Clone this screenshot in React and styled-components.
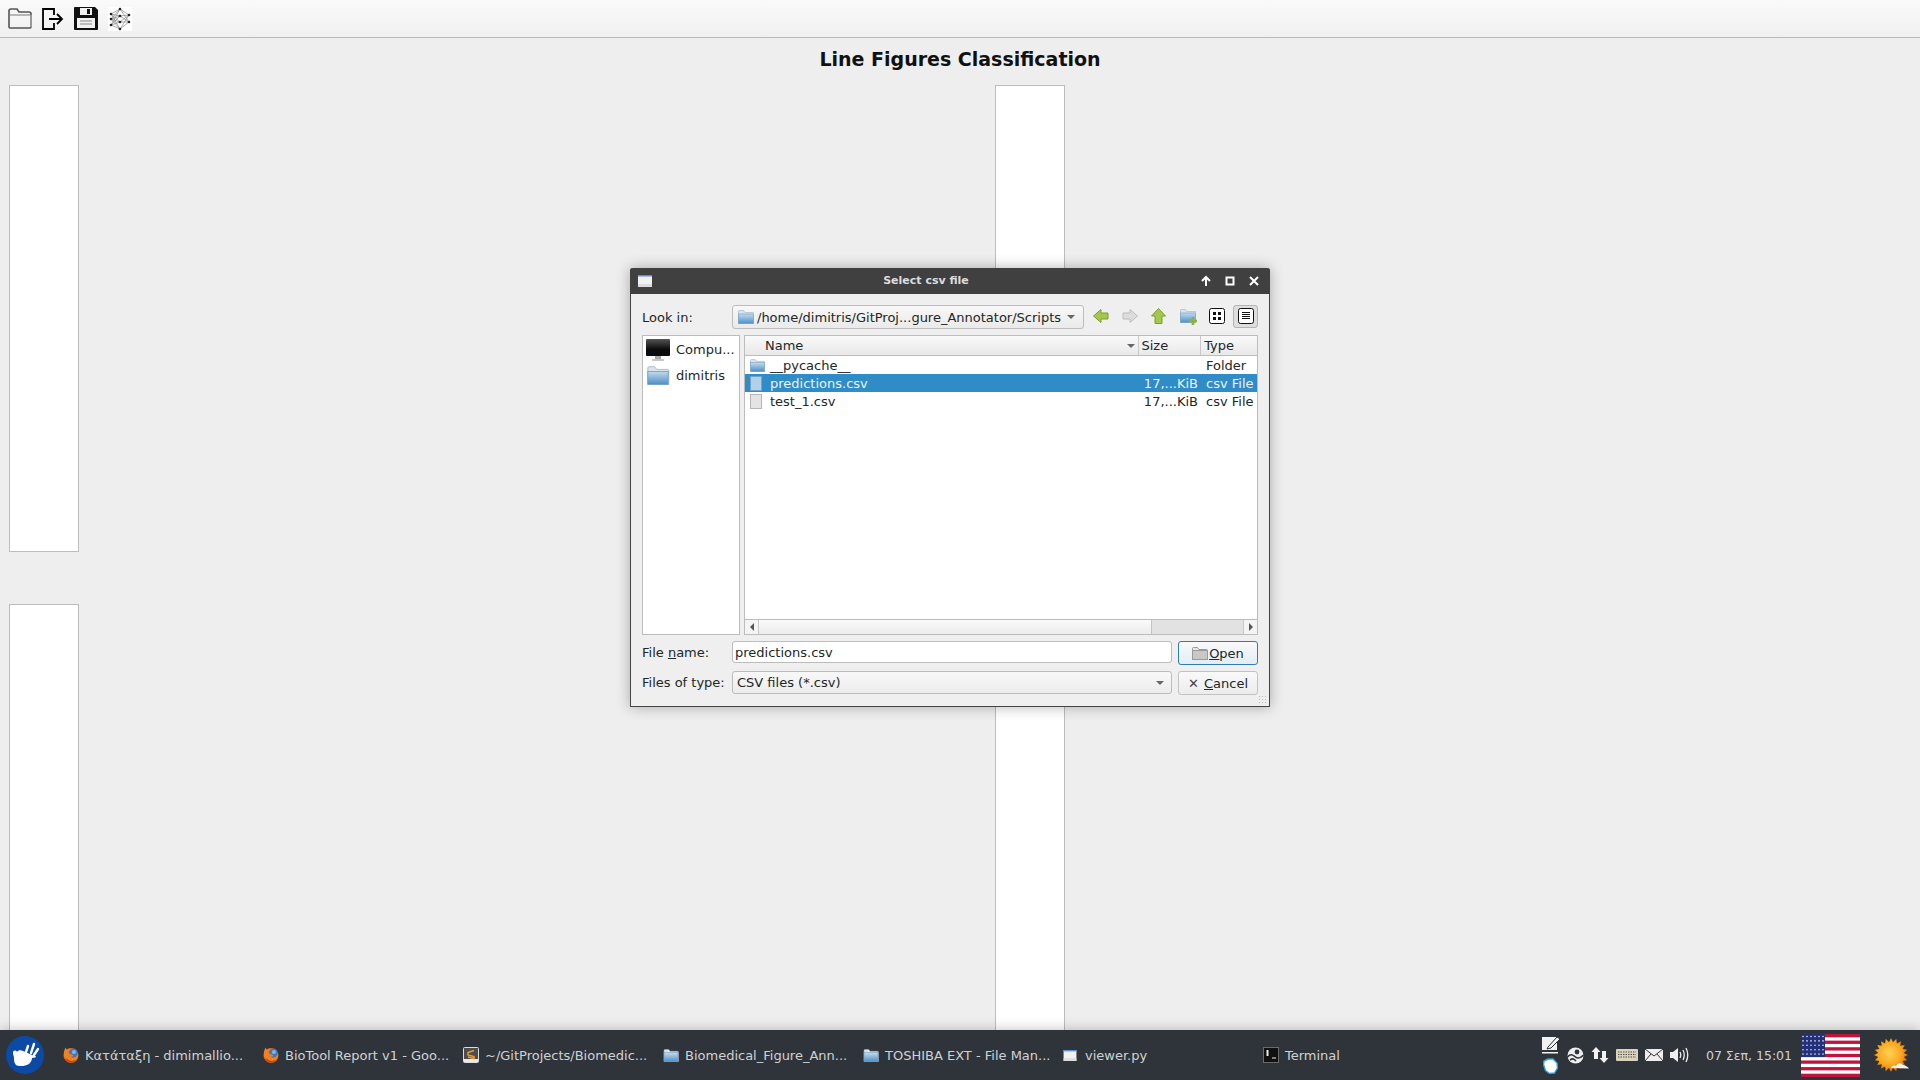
import React from 'react';
import styled, { createGlobalStyle } from 'styled-components';

const GlobalStyle = createGlobalStyle`
    html, body { margin:0; padding:0; height:100%; }
    body { font-family:"DejaVu Sans", sans-serif; font-size:13px; color:#232627; background:#eee; overflow:hidden; }
`;

const FolderIcon = ({ size = 16, h = 14 }) => (
    <svg width={size} height={h} viewBox="0 0 16 14">
        <defs>
            <linearGradient id="fld" x1="0" y1="0" x2="0" y2="1">
                <stop offset="0" stopColor="#c4d9ec" />
                <stop offset="0.45" stopColor="#8db9dc" />
                <stop offset="1" stopColor="#4f8fc4" />
            </linearGradient>
        </defs>
        <path d="M0.5 13.5V1.5q0-1 1-1h4l1.500 2h8q1 0 1 1v10z" fill="#d9e3ea" stroke="#9fb3c2" strokeWidth="0.6" />
        <rect x="0.5" y="4" width="15" height="9.500" fill="url(#fld)" stroke="#6f9dbf" strokeWidth="0.6" />
    </svg>
);

const GrayFolder = () => (
    <svg width="16" height="13" viewBox="0 0 16 13">
        <path d="M0.500 12.500V1.500q0-1 1-1h4l1.500 2h7.500q1 0 1 1v9z" fill="#e6e6e6" stroke="#9a9a9a" />
        <rect x="0.500" y="3.500" width="15" height="9" fill="#c8c8c8" stroke="#9a9a9a" />
    </svg>
);

const FileIcon = ({ selected }) => (
    <svg width="12" height="15" viewBox="0 0 12 15">
        <rect x="0.500" y="0.500" width="11" height="14" fill={selected ? '#b4d0e6' : '#e4e4e4'} stroke={selected ? '#6ea4cc' : '#b5b5b5'} />
    </svg>
);

const WindowIcon = ({ w = 14, h = 12 }) => (
    <svg width={w} height={h} viewBox="0 0 14 12">
        <rect x="0" y="0" width="14" height="12" fill="#f1f1f1" />
        <rect x="0" y="0" width="14" height="1.500" fill="#5a8fd0" />
        <rect x="0" y="9" width="14" height="3" fill="#dcdcdc" />
    </svg>
);

const FirefoxIcon = () => (
    <svg width="16" height="16" viewBox="0 0 16 16">
        <circle cx="8" cy="8.500" r="7.500" fill="#e2601a" />
        <circle cx="10.500" cy="6" r="4.200" fill="#3f78c0" />
        <circle cx="11" cy="5" r="2" fill="#86b6e2" />
        <path d="M1 7c-.5-2.500.5-5 2-6.500 0 1 .5 2 1 2.500 1-1 3-1.500 4.500-1-1.500.5-3 1.500-3 3 0 1.500 1.500 2.500 3 2.500 1 0 2 .5 1.500 1.500-1 1-2.500 1-3.500.5 1 1.500 4 2 6 .5 1-.5 2-2 2-3 .5 1 .5 2 .5 2-.5 3.500-3.500 6-7 6-4 0-7.500-3.500-7-8z" fill="#f0821f" />
        <path d="M2 11.500c1.500 2.500 3.500 4 6 4 2 0 4-1 5-2.500-2 1-6 1.500-8-.5-1-.5-2-1-3-1z" fill="#c9401a" />
    </svg>
);

const SublimeIcon = () => (
    <svg width="16" height="16" viewBox="0 0 16 16">
        <rect x="0.500" y="0.500" width="15" height="15" rx="1" fill="#4d4d4d" stroke="#ddd" />
        <rect x="1" y="12" width="14" height="3" fill="#e8e8e8" />
        <path d="M11 3.500 5 5.500v2.500l6 1.500v2L5 10" fill="none" stroke="#f0962a" strokeWidth="1.500" />
    </svg>
);

const TerminalIcon = () => (
    <svg width="16" height="16" viewBox="0 0 16 16">
        <rect x="0.500" y="0.500" width="15" height="15" fill="#111" stroke="#6b6b6b" />
        <path d="M3 4h3M3 6h3M3 8h3M4.500 3v6M9 11h4" stroke="#eee" strokeWidth="1" />
    </svg>
);

const XfceLogo = () => (
    <svg width="38" height="38" viewBox="0 0 38 38">
        <circle cx="19" cy="19" r="19" fill="#0b4aa5" />
        <path d="M7 17c0-3 3-3 4-1 1-2 4-2 6-1 3 1 6 3 9 4 2 .5 4 1 4 2-1 1-3 .5-4 1 0 3-2 5-3 6-3 2-10 3-13 1-2-2-2-5-2-7 0-2-1-3-1-5z" fill="#fff" />
        <path d="M20 16l2-6M25 17l3-9M28 19l4-6" stroke="#fff" strokeWidth="2.400" strokeLinecap="round" />
    </svg>
);

const Flag = () => (
    <svg width="59" height="43" viewBox="0 0 59 43">
        <rect width="59" height="43" fill="#fff" />
        {[0, 1, 2, 3, 4, 5, 6].map(i => (
            <rect key={i} x="0" y={i * 6.615} width="59" height="3.300" fill="#c0143c" />
        ))}
        <rect width="24" height="23" fill="#24307a" />
        {Array.from({ length: 30 }).map((_, i) => (
            <circle key={i} cx={2 + (i % 6) * 4} cy={2.500 + Math.floor(i / 6) * 4.400} r="0.800" fill="#dfe3f2" />
        ))}
    </svg>
);

const sunPoints = () => {
    const pts = [];
    for (let i = 0; i < 40; i++) {
        const r = i % 2 === 0 ? 17 : 13;
        const a = (i / 40) * Math.PI * 2;
        pts.push(`${(18 + r * Math.cos(a)).toFixed(1)},${(18 + r * Math.sin(a)).toFixed(1)}`);
    }
    return pts.join(' ');
};

const Sun = () => (
    <svg width="37" height="37" viewBox="0 0 37 37">
        <defs>
            <radialGradient id="sunfill" cx="0.450" cy="0.450" r="0.550">
                <stop offset="0" stopColor="#ffd257" />
                <stop offset="0.650" stopColor="#fca61d" />
                <stop offset="1" stopColor="#e86f0b" />
            </radialGradient>
        </defs>
        <polygon points={sunPoints()} fill="url(#sunfill)" />
        <path d="M18 31c1-3 4-3 5-2 1-3 5-4 7-1 2 0 5 2 6 3.500z" fill="#f3f3f3" />
    </svg>
);

const NetworkIcon = () => {
    const left = [[3, 7], [3, 12], [3, 18]];
    const mid = [[12, 2], [12, 9], [12, 15], [12, 22]];
    const right = [[21, 8], [21, 15]];
    const lines = [];
    left.forEach(a => mid.forEach(b => lines.push([a, b])));
    mid.forEach(a => right.forEach(b => lines.push([a, b])));
    return (
        <svg width="24" height="24" viewBox="0 0 24 24">
            <rect width="24" height="24" fill="#fff" />
            {lines.map(([a, b], i) => (
                <line key={i} x1={a[0]} y1={a[1]} x2={b[0]} y2={b[1]} stroke="#8a8a8a" strokeWidth="0.700" />
            ))}
            {[...left, ...mid, ...right].map((p, i) => (
                <circle key={i} cx={p[0]} cy={p[1]} r="1.300" fill="#222" />
            ))}
        </svg>
    );
};

const tasks = [
    { icon: <FirefoxIcon />, label: 'Κατάταξη - dimimallio...' },
    { icon: <FirefoxIcon />, label: 'BioTool Report v1 - Goo...' },
    { icon: <SublimeIcon />, label: '~/GitProjects/Biomedic...' },
    { icon: <FolderIcon size={16} h={13} />, label: 'Biomedical_Figure_Ann...' },
    { icon: <FolderIcon size={16} h={13} />, label: 'TOSHIBA EXT - File Man...' },
    { icon: <WindowIcon w={14} h={11} />, label: 'viewer.py' },
    { icon: <TerminalIcon />, label: 'Terminal' },
];

const App = () => {
    return (
        <Page>
            <GlobalStyle />
            <Toolbar>
                <ToolButton>
                    <svg width="24" height="21" viewBox="0 0 24 21">
                        <path d="M1 19V3q0-2 2-2h6l2 3h10q2 0 2 2v13q0 1-1 1H2q-1 0-1-1z" fill="none" stroke="#555" strokeWidth="1.600" />
                        <path d="M1 7h22" stroke="#777" strokeWidth="1" />
                        <path d="M23 7v12" stroke="#999" strokeWidth="2" />
                    </svg>
                </ToolButton>
                <ToolButton>
                    <svg width="22" height="22" viewBox="0 0 22 22">
                        <path d="M12 7V1H1v20h11v-6" fill="none" stroke="#000" strokeWidth="1.800" />
                        <path d="M7 11h13M15 6l5 5-5 5" fill="none" stroke="#000" strokeWidth="1.800" />
                    </svg>
                </ToolButton>
                <ToolButton>
                    <svg width="24" height="23" viewBox="0 0 24 23">
                        <path d="M0 1q0-1 1-1h20l3 3v19q0 1-1 1H1q-1 0-1-1z" fill="#111" />
                        <rect x="6" y="1" width="12" height="7" fill="#f2f2f2" />
                        <rect x="13" y="2" width="3" height="5" fill="#111" />
                        <rect x="3" y="11" width="18" height="10" fill="#f2f2f2" />
                        <path d="M6 14h12M6 17h12" stroke="#aaa" strokeWidth="1.500" />
                    </svg>
                </ToolButton>
                <ToolButton><NetworkIcon /></ToolButton>
            </Toolbar>
            <Content>
                <Title>Line Figures Classification</Title>
                <PanelGrid>
                    <Panel />
                    <Panel />
                    <Panel />
                    <Panel />
                </PanelGrid>
                <Dialog>
                    <TitleBar>
                        <WindowIcon />
                        <TitleText>Select csv file</TitleText>
                        <WindowButtons>
                            <svg width="12" height="12" viewBox="0 0 12 12">
                                <path d="M6 11V2M2 6l4-4 4 4" fill="none" stroke="#fff" strokeWidth="2" />
                            </svg>
                            <svg width="12" height="12" viewBox="0 0 12 12">
                                <rect x="2.500" y="2.500" width="7" height="7" fill="none" stroke="#fff" strokeWidth="2" />
                            </svg>
                            <svg width="12" height="12" viewBox="0 0 12 12">
                                <path d="M2 2l8 8M10 2l-8 8" fill="none" stroke="#fff" strokeWidth="2" />
                            </svg>
                        </WindowButtons>
                    </TitleBar>
                    <DialogBody>
                        <LookRow>
                            <FieldLabel>Look in:</FieldLabel>
                            <PathCombo>
                                <FolderIcon />
                                <PathText>/home/dimitris/GitProj...gure_Annotator/Scripts</PathText>
                                <Caret />
                            </PathCombo>
                            <NavIcons>
                                <NavIcon>
                                    <svg width="16" height="14" viewBox="0 0 16 14">
                                        <path d="M0.500 7 8 0.500V4h7v6H8v3.500z" fill="#a3c84a" stroke="#7d9d2e" />
                                    </svg>
                                </NavIcon>
                                <NavIcon>
                                    <svg width="16" height="14" viewBox="0 0 16 14">
                                        <path d="M15.500 7 8 0.500V4H1v6h7v3.500z" fill="#dcdcdc" stroke="#bcbcbc" />
                                    </svg>
                                </NavIcon>
                                <NavIcon>
                                    <svg width="15" height="16" viewBox="0 0 15 16">
                                        <path d="M7.500 0.500 14.500 8H11v7.500H4V8H0.500z" fill="#a3c84a" stroke="#7d9d2e" />
                                    </svg>
                                </NavIcon>
                                <NavIcon>
                                    <NewFolder>
                                        <FolderIcon />
                                        <PlusBadge>
                                            <svg width="8" height="8" viewBox="0 0 8 8">
                                                <path d="M4 0v8M0 4h8" stroke="#8cb43c" strokeWidth="2.600" />
                                            </svg>
                                        </PlusBadge>
                                    </NewFolder>
                                </NavIcon>
                                <NavIcon>
                                    <svg width="16" height="16" viewBox="0 0 16 16">
                                        <rect x="0.500" y="0.500" width="15" height="15" rx="2" fill="#fff" stroke="#111" />
                                        <path d="M4 4h3v3H4zM9 4h3v3H9zM4 9h3v3H4zM9 9h3v3H9z" fill="#111" />
                                    </svg>
                                </NavIcon>
                                <NavIcon $active>
                                    <svg width="16" height="16" viewBox="0 0 16 16">
                                        <rect x="0.500" y="0.500" width="15" height="15" rx="2" fill="#fff" stroke="#111" />
                                        <path d="M4 4.500h8M4 6.500h8M4 8.500h8M4 10.500h8" stroke="#111" />
                                    </svg>
                                </NavIcon>
                            </NavIcons>
                        </LookRow>
                        <BrowserRow>
                            <Sidebar>
                                <SideItem>
                                    <svg width="24" height="22" viewBox="0 0 24 22">
                                        <defs>
                                            <linearGradient id="screen" x1="0" y1="0" x2="0" y2="1">
                                                <stop offset="0" stopColor="#555" />
                                                <stop offset="0.600" stopColor="#0c0c0c" />
                                            </linearGradient>
                                        </defs>
                                        <rect width="24" height="17" rx="1" fill="url(#screen)" />
                                        <rect x="9" y="17" width="6" height="3" fill="#aaa" />
                                        <rect x="6" y="20" width="12" height="2" fill="#c8c8c8" />
                                    </svg>
                                    <SideLabel>Compu...</SideLabel>
                                </SideItem>
                                <SideItem>
                                    <FolderIcon size={24} h={19} />
                                    <SideLabel>dimitris</SideLabel>
                                </SideItem>
                            </Sidebar>
                            <FileView>
                                <HeaderRow>
                                    <HeaderCell $w={396} $pad={20}>
                                        Name
                                        <SortCaret />
                                    </HeaderCell>
                                    <HeaderCell $w={62} $pad={2}>Size</HeaderCell>
                                    <HeaderCell $w={56} $pad={3} $last>Type</HeaderCell>
                                </HeaderRow>
                                <FileRows>
                                    <FileRow>
                                        <NameCell><IconSlot><FolderIcon size={15} h={13} /></IconSlot>__pycache__</NameCell>
                                        <SizeCell />
                                        <TypeCell>Folder</TypeCell>
                                    </FileRow>
                                    <FileRow $selected>
                                        <NameCell><IconSlot><FileIcon selected /></IconSlot>predictions.csv</NameCell>
                                        <SizeCell>17,...KiB</SizeCell>
                                        <TypeCell>csv File</TypeCell>
                                    </FileRow>
                                    <FileRow>
                                        <NameCell><IconSlot><FileIcon /></IconSlot>test_1.csv</NameCell>
                                        <SizeCell>17,...KiB</SizeCell>
                                        <TypeCell>csv File</TypeCell>
                                    </FileRow>
                                </FileRows>
                                <HScroll>
                                    <ScrollEnd>
                                        <ArrowLeft />
                                    </ScrollEnd>
                                    <ScrollThumb />
                                    <ScrollTrack />
                                    <ScrollEnd $right>
                                        <ArrowRight />
                                    </ScrollEnd>
                                </HScroll>
                            </FileView>
                        </BrowserRow>
                        <FormGrid>
                            <FormLabel>File <u>n</u>ame:</FormLabel>
                            <NameInput>predictions.csv</NameInput>
                            <ActionButton $focus>
                                <GrayFolder />
                                <span><u>O</u>pen</span>
                            </ActionButton>
                            <FormLabel>Files of type:</FormLabel>
                            <TypeCombo>
                                CSV files (*.csv)
                                <Caret />
                            </TypeCombo>
                            <ActionButton>
                                <CancelMark>✕</CancelMark>
                                <span>&nbsp;<u>C</u>ancel</span>
                            </ActionButton>
                        </FormGrid>
                    </DialogBody>
                    <SizeGrip />
                </Dialog>
            </Content>
            <Taskbar>
                <StartButton><XfceLogo /></StartButton>
                <TaskList>
                    {tasks.map((t, i) => (
                        <TaskItem key={i}>
                            <TaskIcon>{t.icon}</TaskIcon>
                            {t.label}
                        </TaskItem>
                    ))}
                </TaskList>
                <Tray>
                    <TrayStack>
                        <svg width="18" height="18" viewBox="0 0 18 18">
                            <rect x="0" y="1" width="15" height="13" fill="#f2f2f2" />
                            <path d="M6 11 15 1l3 2-9 9-4 1z" fill="#f2f2f2" stroke="#2f343a" strokeWidth="1" />
                            <rect x="0" y="16" width="16" height="1.500" fill="#f2f2f2" />
                        </svg>
                        <SkypeSlot>
                            <svg width="15" height="16" viewBox="0 0 15 16">
                                <path d="M1 3 5 1h5l4 4 .5 5-3 5-5 .500-4-3-2-6z" fill="#fff" stroke="#2aa4e0" strokeWidth="1.400" />
                            </svg>
                        </SkypeSlot>
                    </TrayStack>
                    <TrayIcons>
                        <svg width="17" height="17" viewBox="0 0 17 17">
                            <circle cx="8.500" cy="8.500" r="8" fill="#eee" />
                            <path d="M0.500 10C4 6 6 8 8.500 10s5 1 8-2M3 13c3-2 4-1 6 1" fill="none" stroke="#2f343a" strokeWidth="1.600" />
                            <circle cx="10" cy="5" r="2.400" fill="#2f343a" />
                        </svg>
                        <svg width="18" height="18" viewBox="0 0 18 18">
                            <path d="M5 1 9.500 6H7v7H3V6H0.500z" fill="#f2f2f2" />
                            <path d="M13 17 8.500 12H11V5h4v7h2.500z" fill="#f2f2f2" />
                        </svg>
                        <svg width="22" height="12" viewBox="0 0 22 12">
                            <rect width="22" height="12" rx="1" fill="#d9d2bd" />
                            <path d="M2 3h18M2 5.500h18M2 8h18" stroke="#55524a" strokeWidth="1.200" strokeDasharray="1.500 1" />
                        </svg>
                        <svg width="18" height="12" viewBox="0 0 18 12">
                            <rect width="18" height="12" fill="#eee" />
                            <path d="M0 0l9 7 9-7M0 12l6-7M18 12l-6-7" fill="none" stroke="#333" strokeWidth="1" />
                        </svg>
                        <svg width="19" height="16" viewBox="0 0 19 16">
                            <path d="M0 5h3l5-4v14l-5-4H0z" fill="#eee" />
                            <path d="M10 5q1.500 3 0 6M13 3q2.500 5 0 10M16 1q3.500 7 0 14" fill="none" stroke="#eee" strokeWidth="1.300" />
                        </svg>
                    </TrayIcons>
                    <Clock>07 Σεπ, 15:01</Clock>
                    <Flag />
                    <SunSlot><Sun /></SunSlot>
                </Tray>
            </Taskbar>
        </Page>
    );
};

export default App;

// ------ UI Section
const Page = styled.div`
    height:100vh;
    display:flex;
    flex-direction:column;
    overflow:hidden;
`;

const Toolbar = styled.div`
    height:37px;
    flex:none;
    display:flex;
    align-items:center;
    padding-left:8px;
    gap:10px;
    background:linear-gradient(#fafafa, #f0f0f0);
    border-bottom:1px solid #b9b9b9;
`;

const ToolButton = styled.div`
    display:flex;
    align-items:center;
    justify-content:center;
    height:24px;
`;

const Content = styled.div`
    flex:1;
    position:relative;
    min-height:0;
    overflow:hidden;
    background:#eeeeee;
`;

const Title = styled.div`
    height:47px;
    text-align:center;
    font-size:19px;
    font-weight:bold;
    line-height:42px;
    color:#111;
`;

const PanelGrid = styled.div`
    display:grid;
    grid-template-columns:986px 986px;
    grid-auto-rows:467px;
    row-gap:52px;
    padding-left:9px;
`;

const Panel = styled.div`
    width:70px;
    background:#fff;
    border:1px solid #bdbdbd;
    box-sizing:border-box;
`;

const Dialog = styled.div`
    position:absolute;
    left:630px;
    top:230px;
    width:640px;
    height:439px;
    box-sizing:border-box;
    display:flex;
    flex-direction:column;
    background:#efefef;
    border:1px solid #444;
    border-top:none;
    border-radius:3px 3px 0 0;
    box-shadow:0 0 14px rgba(0,0,0,.3);
`;

const TitleBar = styled.div`
    height:26px;
    flex:none;
    margin:0 -1px;
    padding:0 8px;
    display:flex;
    align-items:center;
    position:relative;
    background:#404040;
    border-radius:3px 3px 0 0;
`;

const TitleText = styled.div`
    flex:1;
    text-align:center;
    color:#dddddd;
    font-size:11px;
    font-weight:bold;
    padding:0 0 2px 0;
`;

const WindowButtons = styled.div`
    display:flex;
    gap:12px;
    padding-right:2px;
`;

const DialogBody = styled.div`
    flex:1;
    display:flex;
    flex-direction:column;
    padding:11px 11px 0 11px;
`;

const LookRow = styled.div`
    display:flex;
    align-items:center;
    height:24px;
`;

const FieldLabel = styled.div`
    width:90px;
    flex:none;
    color:#232627;
    white-space:nowrap;
`;

const FormLabel = styled(FieldLabel)`
    padding-bottom:2px;
`;

const PathCombo = styled.div`
    width:352px;
    height:24px;
    flex:none;
    box-sizing:border-box;
    display:flex;
    align-items:center;
    padding:0 8px 0 5px;
    background:linear-gradient(#f8f8f8, #eaeaea);
    border:1px solid #bcbcbc;
    border-radius:3px;
`;

const PathText = styled.span`
    flex:1;
    margin-left:3px;
    white-space:nowrap;
`;

const Caret = styled.span`
    width:0;
    height:0;
    border-left:4px solid transparent;
    border-right:4px solid transparent;
    border-top:4px solid #666;
    margin-left:auto;
`;

const SortCaret = styled(Caret)`
    position:absolute;
    right:3px;
    top:8px;
`;

const NavIcons = styled.div`
    display:flex;
    align-items:center;
    margin:0 0 2px 4px;
    gap:4px;
`;

const NavIcon = styled.div`
    width:25px;
    height:23px;
    box-sizing:border-box;
    display:flex;
    align-items:center;
    justify-content:center;
    border:1px solid ${p => (p.$active ? '#b4b4b4' : 'transparent')};
    background:${p => (p.$active ? '#dedede' : 'transparent')};
    border-radius:3px;
`;

const NewFolder = styled.div`
    position:relative;
    display:flex;
`;

const PlusBadge = styled.div`
    position:absolute;
    right:-1px;
    bottom:-2px;
    display:flex;
`;

const BrowserRow = styled.div`
    display:flex;
    gap:4px;
    margin-top:6px;
    height:300px;
`;

const Sidebar = styled.div`
    width:98px;
    box-sizing:border-box;
    background:#fff;
    border:1px solid #bcbcbc;
    padding:1px 0 0 3px;
`;

const SideItem = styled.div`
    height:25px;
    display:flex;
    align-items:center;
    margin-bottom:1px;
`;

const SideLabel = styled.span`
    margin-left:6px;
    white-space:nowrap;
`;

const FileView = styled.div`
    width:514px;
    box-sizing:border-box;
    display:flex;
    flex-direction:column;
    background:#fff;
    border:1px solid #bcbcbc;
`;

const HeaderRow = styled.div`
    height:19px;
    flex:none;
    display:flex;
    background:linear-gradient(#f9f9f9, #e9e9e9);
    border-bottom:1px solid #bcbcbc;
`;

const HeaderCell = styled.div`
    width:${p => p.$w}px;
    box-sizing:border-box;
    position:relative;
    padding-left:${p => p.$pad}px;
    line-height:19px;
    border-right:${p => (p.$last ? 'none' : '1px solid #c9c9c9')};
`;

const FileRows = styled.div`
    flex:1;
`;

const FileRow = styled.div`
    height:18px;
    display:flex;
    align-items:center;
    background:${p => (p.$selected ? '#308cc6' : 'transparent')};
    color:${p => (p.$selected ? '#eaf3f9' : '#232627')};
`;

const NameCell = styled.div`
    width:396px;
    display:flex;
    align-items:center;
    white-space:nowrap;
`;

const IconSlot = styled.span`
    width:25px;
    padding-left:5px;
    box-sizing:border-box;
    display:flex;
    align-items:center;
`;

const SizeCell = styled.div`
    width:57px;
    text-align:right;
    white-space:nowrap;
`;

const TypeCell = styled.div`
    padding-left:8px;
    white-space:nowrap;
`;

const HScroll = styled.div`
    height:14px;
    flex:none;
    display:flex;
    background:#e2e2e2;
    border-top:1px solid #bcbcbc;
`;

const ScrollEnd = styled.div`
    width:13px;
    flex:none;
    display:flex;
    align-items:center;
    justify-content:center;
    background:#f4f4f4;
    border-${p => (p.$right ? 'left' : 'right')}:1px solid #c8c8c8;
`;

const ArrowLeft = styled.span`
    border-top:4px solid transparent;
    border-bottom:4px solid transparent;
    border-right:4px solid #555;
`;

const ArrowRight = styled.span`
    border-top:4px solid transparent;
    border-bottom:4px solid transparent;
    border-left:4px solid #555;
`;

const ScrollThumb = styled.div`
    width:392px;
    background:linear-gradient(#fafafa, #ececec);
    border-right:1px solid #c4c4c4;
`;

const ScrollTrack = styled.div`
    flex:1;
`;

const FormGrid = styled.div`
    display:grid;
    grid-template-columns:90px 440px 80px;
    column-gap:0;
    row-gap:6px;
    margin-top:6px;
    align-items:center;
    justify-content:start;
`;

const NameInput = styled.div`
    height:22px;
    box-sizing:border-box;
    padding-left:2px;
    line-height:21px;
    background:#fff;
    border:1px solid #bcbcbc;
    border-radius:3px;
    align-self:start;
`;

const TypeCombo = styled.div`
    height:23px;
    box-sizing:border-box;
    display:flex;
    align-items:center;
    padding:0 7px 0 4px;
    background:linear-gradient(#f8f8f8, #ececec);
    border:1px solid #bcbcbc;
    border-radius:3px;
    align-self:start;
`;

const ActionButton = styled.div`
    width:80px;
    height:24px;
    margin-left:6px;
    box-sizing:border-box;
    display:flex;
    align-items:center;
    justify-content:center;
    gap:1px;
    background:linear-gradient(#f9f9f9, ${p => (p.$focus ? '#e3edf4' : '#ececec')});
    border:1px solid ${p => (p.$focus ? '#2f7fae' : '#c2c2c2')};
    border-radius:3px;
`;

const CancelMark = styled.span`
    font-size:13px;
    color:#444;
`;

const SizeGrip = styled.div`
    position:absolute;
    right:1px;
    bottom:1px;
    width:10px;
    height:10px;
    background-image:radial-gradient(#bbb 1px, transparent 1px);
    background-size:3px 3px;
`;

const Taskbar = styled.div`
    height:50px;
    flex:none;
    position:relative;
    display:flex;
    align-items:center;
    background:#2f343a;
    box-shadow:0 0 12px rgba(0,0,0,.25);
    color:#cfd2d4;
`;

const StartButton = styled.div`
    width:57px;
    flex:none;
    padding-left:6px;
    box-sizing:border-box;
    display:flex;
    align-items:center;
`;

const TaskList = styled.div`
    display:flex;
    flex:1;
    min-width:0;
`;

const TaskItem = styled.div`
    width:200px;
    flex:none;
    box-sizing:border-box;
    padding-left:6px;
    display:flex;
    align-items:center;
    white-space:nowrap;
`;

const TaskIcon = styled.span`
    width:22px;
    flex:none;
    display:flex;
    align-items:center;
`;

const Tray = styled.div`
    position:absolute;
    right:0;
    top:0;
    bottom:0;
    display:flex;
    align-items:center;
    padding-right:10px;
`;

const TrayStack = styled.div`
    display:flex;
    flex-direction:column;
    gap:4px;
    align-items:flex-start;
    margin-right:7px;
`;

const SkypeSlot = styled.div`
    display:flex;
    padding-left:1px;
`;

const TrayIcons = styled.div`
    display:flex;
    align-items:center;
    gap:7px;
`;

const Clock = styled.div`
    margin:0 9px 0 17px;
    font-size:12.5px;
    white-space:nowrap;
`;

const SunSlot = styled.div`
    margin-left:13px;
    display:flex;
`;
